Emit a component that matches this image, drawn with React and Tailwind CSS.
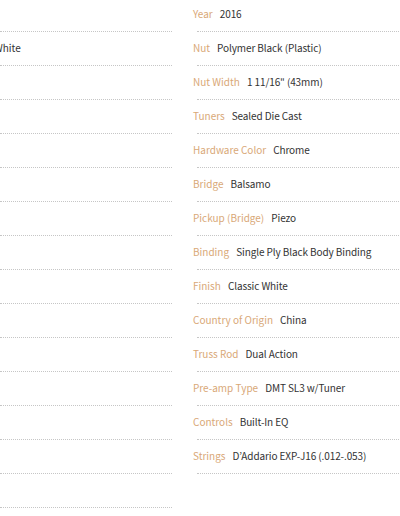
import React from "react";

const specs = [
  ["Year", "2016"],
  ["Nut", "Polymer Black (Plastic)"],
  ["Nut Width", "1 11/16\" (43mm)"],
  ["Tuners", "Sealed Die Cast"],
  ["Hardware Color", "Chrome"],
  ["Bridge", "Balsamo"],
  ["Pickup (Bridge)", "Piezo"],
  ["Binding", "Single Ply Black Body Binding"],
  ["Finish", "Classic White"],
  ["Country of Origin", "China"],
  ["Truss Rod", "Dual Action"],
  ["Pre-amp Type", "DMT SL3 w/Tuner"],
  ["Controls", "Built-In EQ"],
  ["Strings", "D\u2019Addario EXP-J16 (.012-.053)"],
];

function Row({ label, value }) {
  return (
    <div>
      <div className="flex items-center gap-[7px] pt-[6px] pb-[7px] h-[33px] whitespace-nowrap text-[10px] leading-[20px]">
        <span className="text-[#d9a877]">{label}</span>
        <span className="text-[#333333] tracking-[-0.1px]">{value}</span>
      </div>
      <div className="ml-1 border-b border-dotted border-[#c6c6c6]" />
    </div>
  );
}

function LeftRow({ children }) {
  return (
    <div>
      <div className="flex items-center pt-[6px] pb-[7px] h-[33px] whitespace-nowrap text-[10px] leading-[20px] text-[#333333]">
        {children}
      </div>
      <div className="border-b border-dotted border-[#c6c6c6]" />
    </div>
  );
}

export default function App() {
  const leftRows = Array.from({ length: 15 });
  return (
    <div
      className="w-[400px] h-[516px] overflow-hidden bg-white"
      style={{ fontFamily: '"Noto Sans CJK KR", "Noto Sans", sans-serif' }}
    >
      <div className="flex -mt-[2px]">
        <div className="w-[172px] shrink-0">
          {leftRows.map((_, i) => (
            <LeftRow key={i}>
              {i === 1 ? <span className="-ml-[6px]">White</span> : null}
            </LeftRow>
          ))}
        </div>
        <div className="ml-[21px] w-[240px] shrink-0">
          {specs.map(([l, v]) => (
            <Row key={l} label={l} value={v} />
          ))}
        </div>
      </div>
    </div>
  );
}
